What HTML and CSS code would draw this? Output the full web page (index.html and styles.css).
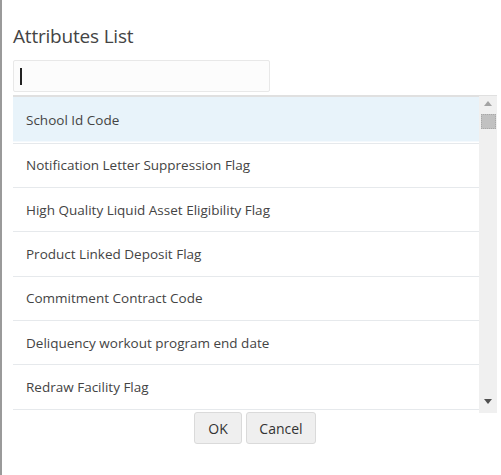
FILE: index.html
```html
<!DOCTYPE html>
<html>
<head>
<meta charset="utf-8">
<link rel="stylesheet" href="styles.css">
</head>
<body>
<div class="dialog">
  <h1 class="title">Attributes List</h1>
  <div class="search"><span class="caret"></span></div>
  <div class="listbox">
    <ul class="items">
      <li class="item selected">School Id Code</li>
      <li class="item">Notification Letter Suppression Flag</li>
      <li class="item">High Quality Liquid Asset Eligibility Flag</li>
      <li class="item">Product Linked Deposit Flag</li>
      <li class="item">Commitment Contract Code</li>
      <li class="item">Deliquency workout program end date</li>
      <li class="item">Redraw Facility Flag</li>
    </ul>
    <div class="scrollbar">
      <span class="arrow up"></span>
      <span class="thumb"></span>
      <span class="track"></span>
      <span class="arrow down"></span>
    </div>
  </div>
  <div class="actions">
    <button class="btn ok">OK</button>
    <button class="btn cancel">Cancel</button>
  </div>
</div>
</body>
</html>
```
FILE: styles.css
```css
html, body {
  margin: 0;
  padding: 0;
  background: #fff;
}
body {
  font-family: "Open Sans", "Noto Sans", sans-serif;
  color: #333;
}
.dialog {
  box-sizing: border-box;
  width: 501px;
  height: 475px;
  border-left: 2px solid #9a9a9a;
  padding: 22px 4px 0 11px;
  display: flex;
  flex-direction: column;
}
.title {
  margin: 0;
  font-size: 19px;
  font-weight: 400;
  line-height: 28px;
  color: #444;
  letter-spacing: -0.2px;
}
.search {
  box-sizing: border-box;
  margin-top: 10px;
  width: 257px;
  height: 32px;
  border: 1px solid #e8e8e8;
  border-radius: 2px;
  background: #fcfcfc;
  display: flex;
  align-items: center;
  padding-left: 6px;
}
.caret {
  width: 2px;
  height: 17px;
  background: #222;
}
.listbox {
  margin-top: 3px;
  display: flex;
  height: 316px;
  border-top: 2px solid #e0e0e0;
}
.items {
  list-style: none;
  margin: 0;
  padding: 0;
  flex: 1;
  height: 313px;
  overflow: hidden;
}
.item {
  box-sizing: border-box;
  height: 44.33px;
  border-bottom: 1px solid #e6e9ec;
  display: flex;
  align-items: center;
  padding-left: 13px;
  font-size: 13.5px;
  color: #444;
}
.item.selected {
  height: 46.7px;
  padding-top: 1px;
  background: #e8f3fa;
  box-shadow: inset 0 -1.5px 0 #fff;
}
.scrollbar {
  width: 18px;
  margin-top: -1px;
  background: #f0f0f0;
  display: flex;
  flex-direction: column;
  align-items: center;
}
.arrow {
  width: 0;
  height: 0;
  border-left: 4.5px solid transparent;
  border-right: 4.5px solid transparent;
}
.arrow.up {
  margin-top: 5px;
  border-bottom: 5px solid #a3a3a3;
}
.arrow.down {
  margin-bottom: 9px;
  border-top: 5px solid #505050;
}
.thumb {
  box-sizing: border-box;
  margin-top: 8px;
  width: 15px;
  height: 15px;
  background: #c1c1c1;
  border: 1px dotted #a8a8a8;
}
.track {
  flex: 1;
}
.actions {
  display: flex;
  justify-content: center;
  gap: 4px;
  margin-top: -1px;
}
.btn {
  box-sizing: border-box;
  height: 32px;
  border: 1px solid #dadada;
  border-radius: 3px;
  background: #efefef;
  font-family: "Open Sans", "Noto Sans", sans-serif;
  font-size: 14px;
  color: #333;
  padding: 0;
}
.btn.ok {
  width: 48px;
}
.btn.cancel {
  width: 70px;
}
```
